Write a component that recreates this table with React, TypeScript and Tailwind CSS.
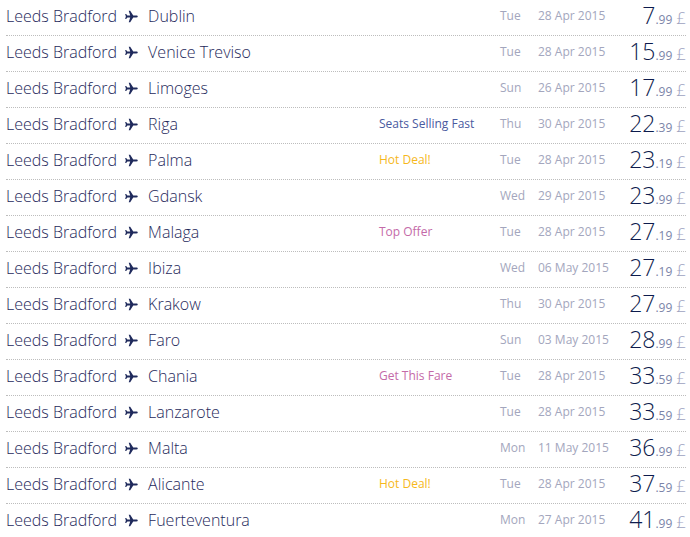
import React from "react";

type Row = { dest: string; label?: { text: string; color: string }; day: string; date: string; whole: string; dec: string };

const BLUE = { text: "Seats Selling Fast", color: "text-[#4a5aa0]" };
const HOT = { text: "Hot Deal!", color: "text-[#f6b81c]" };
const TOP = { text: "Top Offer", color: "text-[#c46aa8]" };
const GET = { text: "Get This Fare", color: "text-[#c46aa8]" };

const rows: Row[] = [
  { dest: "Dublin", day: "Tue", date: "28 Apr 2015", whole: "7", dec: "99" },
  { dest: "Venice Treviso", day: "Tue", date: "28 Apr 2015", whole: "15", dec: "99" },
  { dest: "Limoges", day: "Sun", date: "26 Apr 2015", whole: "17", dec: "99" },
  { dest: "Riga", label: BLUE, day: "Thu", date: "30 Apr 2015", whole: "22", dec: "39" },
  { dest: "Palma", label: HOT, day: "Tue", date: "28 Apr 2015", whole: "23", dec: "19" },
  { dest: "Gdansk", day: "Wed", date: "29 Apr 2015", whole: "23", dec: "99" },
  { dest: "Malaga", label: TOP, day: "Tue", date: "28 Apr 2015", whole: "27", dec: "19" },
  { dest: "Ibiza", day: "Wed", date: "06 May 2015", whole: "27", dec: "19" },
  { dest: "Krakow", day: "Thu", date: "30 Apr 2015", whole: "27", dec: "99" },
  { dest: "Faro", day: "Sun", date: "03 May 2015", whole: "28", dec: "99" },
  { dest: "Chania", label: GET, day: "Tue", date: "28 Apr 2015", whole: "33", dec: "59" },
  { dest: "Lanzarote", day: "Tue", date: "28 Apr 2015", whole: "33", dec: "59" },
  { dest: "Malta", day: "Mon", date: "11 May 2015", whole: "36", dec: "99" },
  { dest: "Alicante", label: HOT, day: "Tue", date: "28 Apr 2015", whole: "37", dec: "59" },
  { dest: "Fuerteventura", day: "Mon", date: "27 Apr 2015", whole: "41", dec: "99" },
];

function Plane() {
  return (
    <svg width="13" height="13" viewBox="0 0 24 24" className="shrink-0">
      <path
        fill="#1f2a5c"
        d="M23.5 12c0-1.1-1-1.7-2.2-1.7h-6.1L9.6 1.2H6.9l2.7 9.1H4.4L2.1 7.2H0.3l1.3 4.8-1.3 4.8h1.8l2.3-3.1h5.2L6.9 22.8h2.7l5.6-9.1h6.1c1.2 0 2.2-.6 2.2-1.7z"
      />
    </svg>
  );
}

export default function App() {
  return (
    <div className="w-[690px] h-[537px] bg-white overflow-hidden pl-[6px] pr-[4px]" style={{ fontFamily: '"Open Sans", sans-serif' }}>
      {rows.map((r, i) => (
        <div
          key={i}
          className={`flex items-center h-[36px] pb-[3px] border-b border-dotted ${i < rows.length - 1 ? "border-[#bdbdbd]" : "border-transparent"}`}
        >
          <div className="w-[373px] flex items-center text-[16px] font-light text-[#1f2a5c] whitespace-nowrap">
            <span>Leeds Bradford</span>
            <span className="ml-[8px] mr-[10px] flex items-center"><Plane /></span>
            <span>{r.dest}</span>
          </div>
          <div className={`w-[121px] text-[12px] whitespace-nowrap ${r.label ? r.label.color : ""}`}>{r.label ? r.label.text : ""}</div>
          <div className="w-[38px] text-[12px] text-[#a3a6bd] whitespace-nowrap">{r.day}</div>
          <div className="w-[70px] text-[12px] text-[#a3a6bd] whitespace-nowrap">{r.date}</div>
          <div className="flex-1 flex items-baseline justify-end whitespace-nowrap">
            <span className="text-[23px] font-light text-[#0d1b4d] leading-none">{r.whole}</span>
            <span className="text-[12px] text-[#7b84a8]">.{r.dec}</span>
            <span className="text-[17px] font-light text-[#9da2bf] ml-[4px] leading-none">£</span>
          </div>
        </div>
      ))}
    </div>
  );
}
